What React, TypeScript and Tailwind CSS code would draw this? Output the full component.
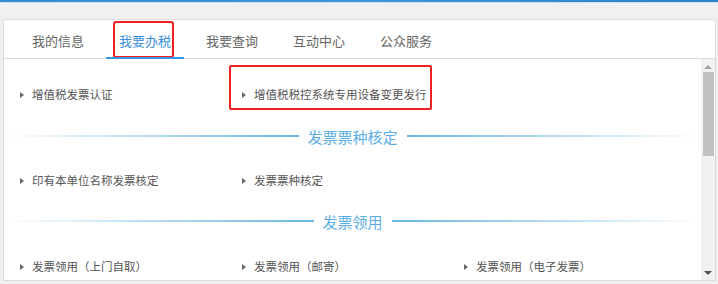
import React from "react";

const font = { fontFamily: '"Microsoft YaHei", "Noto Sans CJK SC", "Noto Sans", sans-serif' };

function Item({ text, boxed }: { text: string; boxed?: boolean }) {
  return (
    <div className="relative flex items-center w-[222px] shrink-0">
      {boxed && (
        <div className="absolute left-[-12px] top-[-24px] w-[203px] h-[45px] border-2 border-[#f02020] rounded-[2px]" />
      )}
      <span className="w-0 h-0 border-y-[3px] border-y-transparent border-l-[4px] border-l-[#666] mr-[8px] ml-[1px]" />
      <span className="text-[11.5px] text-[#555] leading-none whitespace-nowrap">{text}</span>
    </div>
  );
}

function Section({ title, h }: { title: string; h: string }) {
  return (
    <div className={`flex items-center gap-[9px] px-[2px] ${h}`}>
      <div className="flex-1 h-[2px] bg-gradient-to-r from-[rgba(120,190,232,0)] to-[#6ab5e5]" />
      <span className="text-[15px] text-[#5aaee3] leading-none whitespace-nowrap">{title}</span>
      <div className="flex-1 h-[2px] bg-gradient-to-r from-[#6ab5e5] to-[rgba(120,190,232,0)]" />
    </div>
  );
}

export default function App() {
  const tabs = ["我的信息", "我要办税", "我要查询", "互动中心", "公众服务"];
  return (
    <div className="w-[718px] h-[284px] bg-[#f0f0f0] overflow-hidden" style={font}>
      <div className="h-[2px] bg-gradient-to-r from-[#2f8ad8] via-[#3d93dc] to-[#2b80cf]" />
      <div className="h-[1px] bg-[#cfe1f2]" />
      <div className="ml-[3px] mt-[16px] w-[713px] h-[262px] bg-white border border-[#dcdcdc] rounded-t-[3px] flex flex-col">
        {/* Tabs */}
        <div className="h-[39px] border-b border-[#dcdcdc] flex items-stretch pl-[15px] gap-[9px] shrink-0">
          {tabs.map((t, i) => (
            <div key={t} className="relative w-[78px] flex items-center justify-center">
              {i === 1 && (
                <div className="absolute left-[7px] top-[1px] w-[61px] h-[37px] border-2 border-[#f02020] rounded-[3px]" />
              )}
              <span className={`text-[13px] leading-none pt-[3px] ${i === 1 ? "text-[#3b8fe0]" : "text-[#666]"}`}>{t}</span>
              {i === 1 && <div className="absolute left-0 right-0 bottom-[-1px] h-[2px] bg-[#3a97e8]" />}
            </div>
          ))}
        </div>
        {/* Content */}
        <div className="flex flex-1 min-h-0">
          <div className="flex-1 overflow-hidden">
            <div className="pt-[14px]">
              <div className="h-[44px] flex items-center pl-[15px]">
                <Item text="增值税发票认证" />
                <Item text="增值税税控系统专用设备变更发行" boxed />
              </div>
              <Section title="发票票种核定" h="h-[38px]" />
              <div className="h-[52px] flex items-center pl-[15px]">
                <Item text="印有本单位名称发票核定" />
                <Item text="发票票种核定" />
              </div>
              <Section title="发票领用" h="h-[28px]" />
              <div className="h-[64px] flex items-center pl-[15px]">
                <Item text="发票领用（上门自取）" />
                <Item text="发票领用（邮寄）" />
                <Item text="发票领用（电子发票）" />
              </div>
            </div>
          </div>
          {/* Scrollbar */}
          <div className="w-[14px] bg-[#f1f1f1] flex flex-col items-center shrink-0">
            <div className="h-[13px] flex items-center justify-center pt-[2px]">
              <span className="w-0 h-0 border-x-[4px] border-x-transparent border-b-[4px] border-b-[#a3a3a3]" />
            </div>
            <div className="w-[11px] h-[84px] bg-[#c1c1c1]" />
            <div className="flex-1" />
            <div className="h-[13px] flex items-center justify-center pb-[2px]">
              <span className="w-0 h-0 border-x-[4px] border-x-transparent border-t-[4px] border-t-[#505050]" />
            </div>
          </div>
        </div>
      </div>
    </div>
  );
}
